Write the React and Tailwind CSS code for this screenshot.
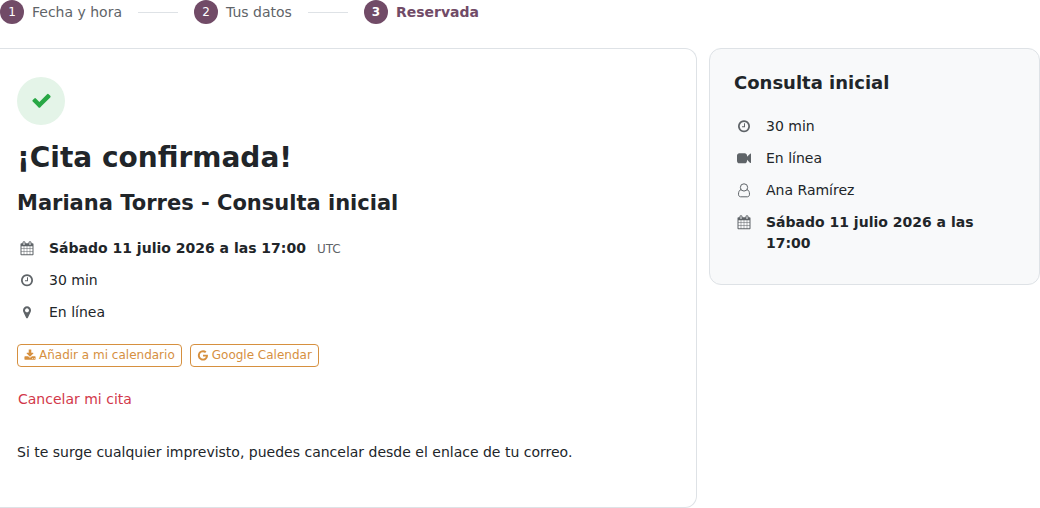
import React from 'react';

const PATHS = {
  check:
    'M1671 566q0 40-28 68l-724 724-136 136q-28 28-68 28t-68-28l-136-136-362-362q-28-28-28-68t28-68l136-136q28-28 68-28t68 28l294 295 656-657q28-28 68-28t68 28l136 136q28 28 28 68z',
  clock:
    'M1024 544v448q0 14-9 23t-23 9h-320q-14 0-23-9t-9-23v-64q0-14 9-23t23-9h224v-352q0-14 9-23t23-9h64q14 0 23 9t9 23zm416 352q0-148-73-273t-198-198-273-73-273 73-198 198-73 273 73 273 198 198 273 73 273-73 198-198 73-273zm224 0q0 209-103 385.5t-279.5 279.5-385.5 103-385.5-103-279.5-279.5-103-385.5 103-385.5 279.5-279.5 385.5-103 385.5 103 279.5 279.5 103 385.5z',
  calendar:
    'M192 1664h288v-288h-288v288zm352 0h320v-288h-320v288zm-352-352h288v-320h-288v320zm352 0h320v-320h-320v320zm-352-384h288v-288h-288v288zm736 736h320v-288h-320v288zm-384-736h320v-288h-320v288zm768 736h288v-288h-288v288zm-384-352h320v-320h-320v320zm-352-864v-288q0-13-9.5-22.5t-22.5-9.5h-64q-13 0-22.5 9.5t-9.5 22.5v288q0 13 9.5 22.5t22.5 9.5h64q13 0 22.5-9.5t9.5-22.5zm736 864h288v-320h-288v320zm-384-384h320v-288h-320v288zm384 0h288v-288h-288v288zm32-480v-288q0-13-9.5-22.5t-22.5-9.5h-64q-13 0-22.5 9.5t-9.5 22.5v288q0 13 9.5 22.5t22.5 9.5h64q13 0 22.5-9.5t9.5-22.5zm384-64v1280q0 52-38 90t-90 38h-1408q-52 0-90-38t-38-90v-1280q0-52 38-90t90-38h128v-96q0-66 47-113t113-47h64q66 0 113 47t47 113v96h384v-96q0-66 47-113t113-47h64q66 0 113 47t47 113v96h128q52 0 90 38t38 90z',
  marker:
    'M1152 640q0-106-75-181t-181-75-181 75-75 181 75 181 181 75 181-75 75-181zm256 0q0 109-33 179l-364 774q-16 33-47.5 52t-67.5 19-67.5-19-46.5-52l-365-774q-33-70-33-179 0-212 150-362t362-150 362 150 150 362z',
  download:
    'M1344 1344q0-26-19-45t-45-19-45 19-19 45 19 45 45 19 45-19 19-45zm256 0q0-26-19-45t-45-19-45 19-19 45 19 45 45 19 45-19 19-45zm128-224v320q0 40-28 68t-68 28h-1472q-40 0-68-28t-28-68v-320q0-40 28-68t68-28h465l135 136q58 56 136 56t136-56l136-136h464q40 0 68 28t28 68zm-325-569q17 41-14 70l-448 448q-18 19-45 19t-45-19l-448-448q-31-29-14-70 17-39 59-39h256v-448q0-26 19-45t45-19h256q26 0 45 19t19 45v448h256q42 0 59 39z',
  google:
    'M896 786h725q12 67 12 128 0 217-91 387.5t-259.5 266.5-386.5 96q-157 0-299-60.5t-245-163.5-163.5-245-60.5-299 60.5-299 163.5-245 245-163.5 299-60.5q300 0 515 201l-209 201q-123-119-306-119-129 0-238.5 65t-173.5 176.5-64 243.5 64 243.5 173.5 176.5 238.5 65q87 0 160-24t120-60 82-82 51.5-87 22.5-78h-436v-264z',
  video:
    'M1792 352v1088q0 42-39 59-13 5-25 5-27 0-45-19l-403-403v166q0 119-84.5 203.5t-203.5 84.5h-704q-119 0-203.5-84.5t-84.5-203.5v-704q0-119 84.5-203.5t203.5-84.5h704q119 0 203.5 84.5t84.5 203.5v165l403-402q18-19 45-19 12 0 25 5 39 17 39 59z',
};

function Icon({ name, className }) {
  return (
    <svg viewBox="0 90 1792 1792" fill="currentColor" overflow="visible" aria-hidden="true" className={className}>
      <path d={PATHS[name]} />
    </svg>
  );
}

function UserIcon({ className }) {
  return (
    <svg viewBox="0 90 1792 1792" fill="none" stroke="currentColor" strokeWidth="128" overflow="visible" aria-hidden="true" className={className}>
      <circle cx="896" cy="530" r="466" />
      <path d="M520 805C280 870 192 1120 192 1400C192 1590 300 1728 450 1728H1342C1492 1728 1600 1590 1600 1400C1600 1120 1512 870 1272 805" />
    </svg>
  );
}

function Step({ number, label, current }) {
  return (
    <li
      aria-current={current ? 'step' : undefined}
      className={current ? 'flex items-center gap-2 font-bold text-[#714b67]' : 'flex items-center gap-2 text-[#5f6468]'}
    >
      <span className="flex size-6 items-center justify-center rounded-full bg-[#714b67] text-xs text-white">{number}</span>
      {label}
    </li>
  );
}

function Divider() {
  return <li aria-hidden="true" className="mx-4 h-px w-10 bg-[#dee2e6]" />;
}

function Detail({ icon, children }) {
  return (
    <li className="flex gap-3">
      <span className="flex h-[21px] w-5 shrink-0 items-center justify-center text-[#5f6468]">{icon}</span>
      <span>{children}</span>
    </li>
  );
}

const actionClass =
  'flex items-center gap-[3px] rounded border border-[#d6903f] px-1.5 text-xs leading-[21px] text-[#d6903f]';

export default function App() {
  return (
    <div className="bg-white font-['DejaVu_Sans',sans-serif] text-sm leading-[21px] text-[#212529]">
      <nav aria-label="Progreso">
        <ol className="flex items-center">
          <Step number={1} label="Fecha y hora" />
          <Divider />
          <Step number={2} label="Tus datos" />
          <Divider />
          <Step number={3} label="Reservada" current />
        </ol>
      </nav>

      <div className="mt-6 flex items-start gap-3">
        <main className="min-w-0 flex-1 rounded-r-xl border-y border-r border-[#dee2e6] pt-7 pr-6 pb-11 pl-[17px]">
          <div className="flex size-12 items-center justify-center rounded-full bg-[#e4f4e8] text-[#28a745]">
            <Icon name="check" className="size-[21px]" />
          </div>
          <h1 className="mt-4 text-[28px] leading-[33px] font-bold">¡Cita confirmada!</h1>
          <h2 className="mt-[17px] text-[21px] leading-[25px] font-bold">Mariana Torres - Consulta inicial</h2>

          <ul className="mt-[22px] flex flex-col gap-[11px]">
            <Detail icon={<Icon name="calendar" className="size-[14px]" />}>
              <strong>Sábado 11 julio 2026 a las 17:00</strong>
              <span className="ml-[11px] text-xs text-[#5f6468]">UTC</span>
            </Detail>
            <Detail icon={<Icon name="clock" className="size-[14px]" />}>30 min</Detail>
            <Detail icon={<Icon name="marker" className="size-[14px]" />}>En línea</Detail>
          </ul>

          <div className="mt-[21px] flex flex-wrap gap-2">
            <button type="button" className={actionClass}>
              <Icon name="download" className="size-3" />
              Añadir a mi calendario
            </button>
            <button type="button" className={actionClass}>
              <Icon name="google" className="size-3" />
              Google Calendar
            </button>
          </div>

          <div className="mt-[22px]">
            <a href="#cancelar" className="inline-block px-px text-[#d2384a]">
              Cancelar mi cita
            </a>
          </div>

          <p className="mt-8">Si te surge cualquier imprevisto, puedes cancelar desde el enlace de tu correo.</p>
        </main>

        <aside className="w-[331px] shrink-0 rounded-xl border border-[#dee2e6] bg-[#f8f9fa] px-6 pt-6 pb-[30px]">
          <h2 className="text-lg leading-[19px] font-bold">Consulta inicial</h2>
          <ul className="mt-6 flex flex-col gap-[11px]">
            <Detail icon={<Icon name="clock" className="size-[14px]" />}>30 min</Detail>
            <Detail icon={<Icon name="video" className="size-[14px]" />}>En línea</Detail>
            <Detail icon={<UserIcon className="size-[14px]" />}>Ana Ramírez</Detail>
            <Detail icon={<Icon name="calendar" className="size-[14px]" />}>
              <strong>Sábado 11 julio 2026 a las 17:00</strong>
            </Detail>
          </ul>
        </aside>
      </div>
    </div>
  );
}
